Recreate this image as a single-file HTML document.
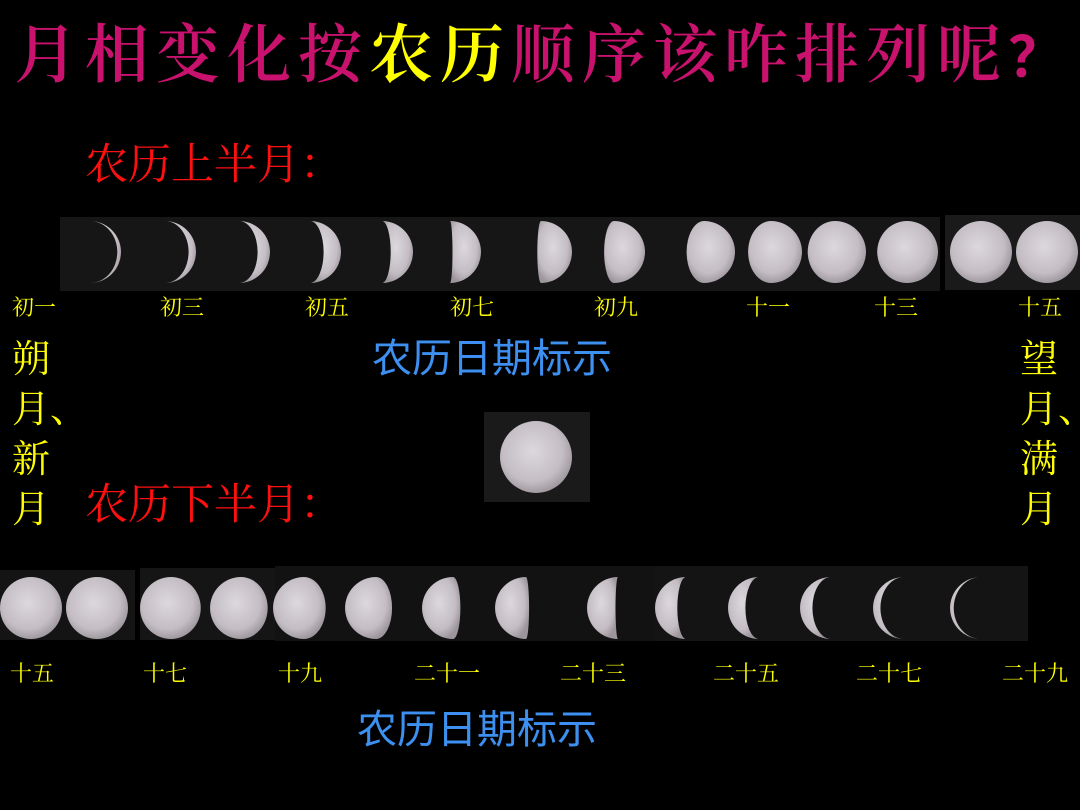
<!DOCTYPE html>
<html><head><meta charset="utf-8"><style>
html,body{margin:0;padding:0;background:#000;}
body{width:1080px;height:810px;position:relative;overflow:hidden;font-family:"Noto Serif CJK SC",serif;}
.t{position:absolute;white-space:nowrap;line-height:1;}
.y{color:#ffff00}
.lab{font-size:22px;color:#ffff00;font-family:"Noto Serif CJK SC",serif;}
.red{color:#ff1010;font-size:43px}
.blue{color:#3d8ff0;font-size:40px;font-family:"Noto Sans CJK SC",sans-serif;}
.v{font-size:38px;color:#ffff00;line-height:50px}
.q{display:inline-block;width:60px;text-align:center;font-family:"Noto Sans CJK SC",sans-serif;font-size:56px}
</style></head><body>
<svg id="s" width="1080" height="810" style="position:absolute;left:0;top:0">
<defs><radialGradient id="g" cx="0.45" cy="0.42" r="0.6"><stop offset="0" stop-color="#dcd8dc"/><stop offset="0.7" stop-color="#c4bec4"/><stop offset="1" stop-color="#9c969c"/></radialGradient></defs>
<rect x="60" y="217" width="880" height="74" fill="#161616"/>
<rect x="945" y="215" width="135" height="75" fill="#1a1a1a"/>
<rect x="0" y="570" width="135" height="70" fill="#141414"/>
<rect x="140" y="568" width="135" height="72" fill="#151515"/>
<rect x="275" y="566" width="380" height="75" fill="#121212"/>
<rect x="655" y="566" width="373" height="75" fill="#141414"/>
<rect x="484" y="412" width="106" height="90" fill="#1a1a1a"/>
<circle cx="536" cy="457" r="36" fill="url(#g)"/>
<g id="m"></g>
</svg>
<div class="t" style="left:14px;top:18px;font-size:64px;color:#c8126e;letter-spacing:7px;font-weight:600">月相变化按<span class="y">农历</span>顺序该咋排列呢<span class="q">？</span></div>
<div class="t red" style="left:85px;top:140px">农历上半月<span style="display:inline-block;width:40px;text-align:center">：</span></div>
<div class="t red" style="left:85px;top:480px">农历下半月<span style="display:inline-block;width:40px;text-align:center">：</span></div>
<div class="t lab" style="left:12px;top:296px">初一</div>
<div class="t lab" style="left:160px;top:296px">初三</div>
<div class="t lab" style="left:305px;top:296px">初五</div>
<div class="t lab" style="left:450px;top:296px">初七</div>
<div class="t lab" style="left:594px;top:296px">初九</div>
<div class="t lab" style="left:746px;top:296px">十一</div>
<div class="t lab" style="left:874px;top:296px">十三</div>
<div class="t lab" style="left:1018px;top:296px">十五</div>
<div class="t lab" style="left:10px;top:662px">十五</div>
<div class="t lab" style="left:143px;top:662px">十七</div>
<div class="t lab" style="left:278px;top:662px">十九</div>
<div class="t lab" style="left:414px;top:662px">二十一</div>
<div class="t lab" style="left:560px;top:662px">二十三</div>
<div class="t lab" style="left:713px;top:662px">二十五</div>
<div class="t lab" style="left:856px;top:662px">二十七</div>
<div class="t lab" style="left:1002px;top:662px">二十九</div>
<div class="t blue" style="left:372px;top:335px">农历日期标示</div>
<div class="t blue" style="left:357px;top:706px">农历日期标示</div>
<div class="t v" style="left:12px;top:331px">朔<br>月、<br>新<br>月</div>
<div class="t v" style="left:1020px;top:331px">望<br>月、<br>满<br>月</div>
<script>
var g=document.getElementById('m'),h='';
function moon(cx,cy,r,f,wax){
 if(f>=0.99){h+='<circle cx="'+cx+'" cy="'+cy+'" r="'+r+'" fill="url(#g)"/>';return;}
 var k=Math.abs(1-2*f)*r, top=(cy-r),bot=(cy+r),s1,s2;
 if(wax){s1=1;s2=f<0.5?0:1;}else{s1=0;s2=f<0.5?1:0;}
 h+='<path d="M'+cx+','+top+' A'+r+','+r+' 0 0 '+s1+' '+cx+','+bot+' A'+k.toFixed(1)+','+r+' 0 0 '+s2+' '+cx+','+top+'Z" fill="url(#g)"/>';
}
var tr=[121,196,270,341,413,481,572,645,735,802,866,938,1012,1078];
var tf=[.06,.12,.2,.28,.36,.46,.56,.66,.78,.87,.94,.98,1,1];
for(var i=0;i<14;i++)moon(tr[i]-31,252,31,tf[i],true);
var bl=[0,66,140,210,273,345,422,495,587,655,728,800,873,950];
var bf=[1,1,.98,.93,.85,.76,.62,.55,.46,.36,.28,.2,.12,.06];
for(var i=0;i<14;i++)moon(bl[i]+31,608,31,bf[i],false);
g.innerHTML=h;
</script>
</body></html>
